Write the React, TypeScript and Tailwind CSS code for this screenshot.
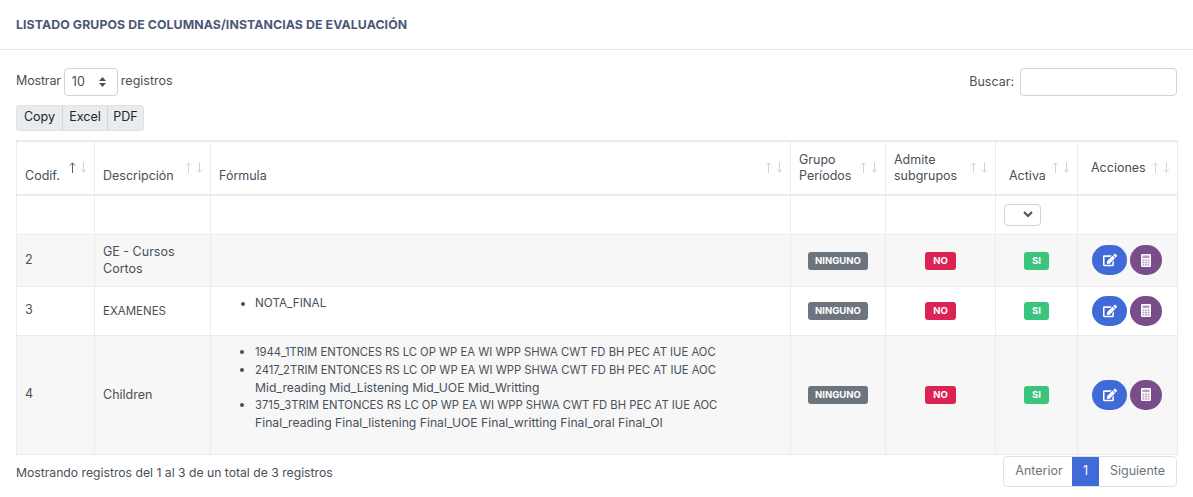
import React from "react";
import { FaEdit } from "react-icons/fa";

const cols = [78, 116, 580, 95, 110, 82, 100];

function Sort({ active = false, top = 20 }: { active?: boolean; top?: number }) {
  return (
    <span className="absolute right-[7px] flex gap-[4px] leading-none" style={{ top }}>
      <svg width="7" height="11" viewBox="0 0 7 11" fill="none" stroke={active ? "#5a5f6b" : "#d0d3da"} strokeWidth="1"><path d="M3.5 11V1M1 3.5l2.5-2.7L6 3.5" /></svg>
      <svg width="7" height="11" viewBox="0 0 7 11" fill="none" stroke="#d0d3da" strokeWidth="1"><path d="M3.5 0v10M1 7.5l2.5 2.7L6 7.5" /></svg>
    </span>
  );
}

function CalcIcon() {
  return (
    <svg width="10" height="13" viewBox="0 0 10 13">
      <rect width="10" height="13" rx="1.2" fill="#fff" />
      <rect x="1.5" y="1.5" width="7" height="2.6" fill="#794c8a" opacity="0.55" />
      {[5.6, 7.9, 10.2].map((y) =>
        [1.5, 4.1, 6.7].map((x) => <rect key={`${x}-${y}`} x={x} y={y} width="1.8" height="1.5" fill="#794c8a" opacity="0.55" />)
      )}
    </svg>
  );
}

function Th({ children, top, active, align = "align-bottom pb-[10px]" }: { children: React.ReactNode; top?: number; active?: boolean; align?: string }) {
  return (
    <th className={`relative border-x border-[#e9ebef] px-2 font-normal text-left leading-[16px] ${align}`}>
      {children}
      <Sort top={top} active={active} />
    </th>
  );
}

function Row({ cod, desc, h, children }: { cod: string; desc: React.ReactNode; h: string; children?: React.ReactNode }) {
  return (
    <tr className={`${h} border-b border-[#e9ebef]`}>
      <td className="border-x border-[#e9ebef] px-2 align-middle">{cod}</td>
      <td className="border-x border-[#e9ebef] px-2 align-middle leading-[17px]">{desc}</td>
      <td className="border-x border-[#e9ebef] px-2 align-middle leading-[17px]">{children}</td>
      <td className="border-x border-[#e9ebef] px-2 text-center align-middle">
        <span className="inline-block w-[60px] h-[18px] leading-[18px] rounded-[3px] bg-[#6c757d] text-white text-[9.5px] font-bold">NINGUNO</span>
      </td>
      <td className="border-x border-[#e9ebef] px-2 text-center align-middle">
        <span className="inline-block w-[31px] h-[18px] leading-[18px] rounded-[3px] bg-[#dc2454] text-white text-[9.5px] font-bold">NO</span>
      </td>
      <td className="border-x border-[#e9ebef] px-2 text-center align-middle">
        <span className="inline-block w-[25px] h-[18px] leading-[18px] rounded-[3px] bg-[#3ac47d] text-white text-[9.5px] font-bold">SI</span>
      </td>
      <td className="border-x border-[#e9ebef] align-middle">
        <div className="flex justify-center gap-[3px] pr-[1px]">
          <span className="w-[35px] h-[30px] rounded-full bg-[#3f6ad8] flex items-center justify-center text-white"><FaEdit size={14} /></span>
          <span className="w-[32px] h-[30px] rounded-full bg-[#794c8a] flex items-center justify-center text-white"><CalcIcon /></span>
        </div>
      </td>
    </tr>
  );
}

const Caps = ({ children }: { children: React.ReactNode }) => <span className="text-[11.25px]">{children}</span>;

export default function App() {
  return (
    <div className="w-[1193px] h-[497px] overflow-hidden bg-white text-[12.5px] text-[#495057] font-['Inter','Liberation_Sans',sans-serif]">
      <div className="h-[50px] border-b border-[#e5e7eb] px-4 flex items-center pt-[1px]">
        <h1 className="text-[12.3px] font-bold text-[#4d5778] tracking-[0.1px]">LISTADO GRUPOS DE COLUMNAS/INSTANCIAS DE EVALUACIÓN</h1>
      </div>
      <div className="px-4">
        <div className="flex justify-between items-center pt-[18px] h-[46px]">
          <div className="flex items-center gap-[3px] h-[28px]">
            <span className="tracking-[-0.15px] pb-[1px]">Mostrar</span>
            <span className="w-[54px] h-[28px] border border-[#ced4da] rounded-[4px] flex items-center justify-between pl-[7px] pr-[11px]">
              <span>10</span>
              <svg width="7" height="10" viewBox="0 0 7 10" fill="#495057"><path d="M3.5 0 7 4H0zM3.5 10 0 6h7z" /></svg>
            </span>
            <span className="pb-[1px]">registros</span>
          </div>
          <div className="flex items-center gap-[6px]">
            <span>Buscar:</span>
            <span className="block w-[157px] h-[28px] border border-[#ced4da] rounded-[4px]" />
          </div>
        </div>
        <div className="mt-[9px] inline-flex h-[26px] bg-[#e9ecef] border border-[#dee2e6] rounded-[3px] text-[#212529] items-center">
          <span className="w-[46px] text-center border-r border-[#d3d7dc] leading-[22px] h-[24px]">Copy</span>
          <span className="w-[45px] text-center border-r border-[#d3d7dc] leading-[22px] h-[24px]">Excel</span>
          <span className="w-[35px] text-center leading-[22px] h-[24px]">PDF</span>
        </div>
        <table className="mt-[9px] w-[1161px] table-fixed border-collapse">
          <colgroup>{cols.map((w, i) => <col key={i} style={{ width: w }} />)}</colgroup>
          <thead>
            <tr className="h-[54px] border-y-2 border-[#e9ebef]">
              <Th active>Codif.</Th>
              <Th>Descripción</Th>
              <Th>Fórmula</Th>
              <Th>Grupo<br />Períodos</Th>
              <Th>Admite<br />subgrupos</Th>
              <Th align="align-bottom pb-[10px] !pl-[13px]">Activa</Th>
              <Th align="align-middle pb-[1px] !pl-[13px] whitespace-nowrap">Acciones</Th>
            </tr>
          </thead>
          <tbody>
            <tr className="h-[39px] border-b border-[#e9ebef]">
              {[0, 1, 2, 3, 4].map((i) => <td key={i} className="border-x border-[#e9ebef]" />)}
              <td className="border-x border-[#e9ebef] px-2">
                <span className="flex w-[37px] h-[22px] border border-[#ced4da] rounded-[4px] items-center justify-end pr-[7px]">
                  <svg width="10" height="7" viewBox="0 0 10 7" fill="none" stroke="#495057" strokeWidth="2"><path d="M1 1l4 4 4-4" /></svg>
                </span>
              </td>
              <td className="border-x border-[#e9ebef]" />
            </tr>
            <Row cod="2" h="h-[52px] bg-[#f7f7f7]" desc={<>GE - Cursos<br />Cortos</>} />
            <Row cod="3" h="h-[49px]" desc={<span className="text-[11.5px]">EXAMENES</span>}>
              <ul className="list-disc pl-[36px] pb-[14px]"><li className="text-[11.7px]">NOTA_FINAL</li></ul>
            </Row>
            <Row cod="4" h="h-[119px] bg-[#f7f7f7]" desc="Children">
              <ul className="list-disc pl-[36px] pb-[15px] leading-[17px] text-[12.2px]">
                <li><Caps>1944_1TRIM ENTONCES RS LC OP WP EA WI WPP SHWA CWT FD BH PEC AT IUE AOC</Caps></li>
                <li><Caps>2417_2TRIM ENTONCES RS LC OP WP EA WI WPP SHWA CWT FD BH PEC AT IUE AOC</Caps> Mid_reading Mid_Listening Mid_UOE Mid_Writting</li>
                <li><Caps>3715_3TRIM ENTONCES RS LC OP WP EA WI WPP SHWA CWT FD BH PEC AT IUE AOC</Caps> Final_reading Final_listening Final_UOE Final_writting Final_oral Final_OI</li>
              </ul>
            </Row>
          </tbody>
        </table>
        <div className="flex justify-between items-center mt-[1px]">
          <span className="pt-[5px] text-[12.2px]">Mostrando registros del 1 al 3 de un total de 3 registros</span>
          <div className="flex h-[31px] border border-[#dee2e6] rounded-[4px] items-stretch text-[#6c757d] overflow-hidden">
            <span className="w-[68px] flex items-center justify-center pt-[1px] pl-[2px]">Anterior</span>
            <span className="w-[27px] flex items-center justify-center bg-[#3f6ad8] text-white pt-[1px]">1</span>
            <span className="w-[77px] flex items-center justify-center pt-[1px]">Siguiente</span>
          </div>
        </div>
      </div>
    </div>
  );
}
